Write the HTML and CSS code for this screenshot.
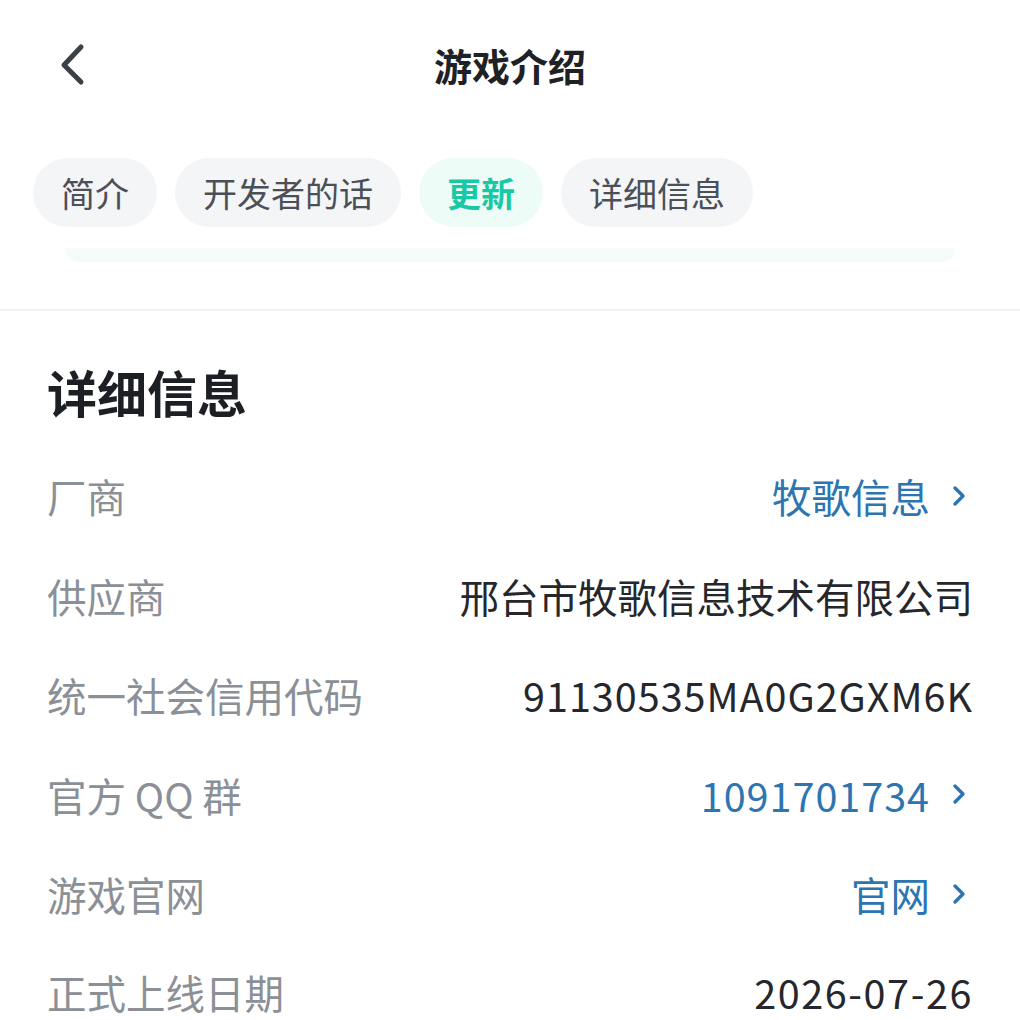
FILE: index.html
```html
<!DOCTYPE html>
<html lang="zh-CN">
<head>
<meta charset="utf-8">
<title>游戏介绍</title>
<link rel="stylesheet" href="styles.css">
</head>
<body>
<div class="page">
  <header class="topbar">
    <div class="back">
      <svg width="40" height="50" viewBox="0 0 40 50" aria-hidden="true">
        <polyline points="24,8 7,26 24,43" fill="none" stroke="#3b4047" stroke-width="5" stroke-linecap="round" stroke-linejoin="round"/>
      </svg>
    </div>
    <h1 class="title">游戏介绍</h1>
    <div></div>
  </header>

  <nav class="tabs">
    <span class="tab">简介</span>
    <span class="tab">开发者的话</span>
    <span class="tab active">更新</span>
    <span class="tab">详细信息</span>
  </nav>
  <div class="card-tail"></div>
  <div class="divider"></div>

  <section class="details">
    <h2 class="heading">详细信息</h2>
    <div class="row">
      <span class="label">厂商</span>
      <span class="value link">牧歌信息<svg class="chev" width="22" height="22" viewBox="0 0 22 22" aria-hidden="true"><polyline points="4,3 12,11 4,19" fill="none" stroke="currentColor" stroke-width="3.4" stroke-linecap="round" stroke-linejoin="round"/></svg></span>
    </div>
    <div class="row">
      <span class="label">供应商</span>
      <span class="value">邢台市牧歌信息技术有限公司</span>
    </div>
    <div class="row">
      <span class="label">统一社会信用代码</span>
      <span class="value num">91130535MA0G2GXM6K</span>
    </div>
    <div class="row">
      <span class="label">官方 QQ 群</span>
      <span class="value link"><span class="num">1091701734</span><svg class="chev" width="22" height="22" viewBox="0 0 22 22" aria-hidden="true"><polyline points="4,3 12,11 4,19" fill="none" stroke="currentColor" stroke-width="3.4" stroke-linecap="round" stroke-linejoin="round"/></svg></span>
    </div>
    <div class="row">
      <span class="label">游戏官网</span>
      <span class="value link">官网<svg class="chev" width="22" height="22" viewBox="0 0 22 22" aria-hidden="true"><polyline points="4,3 12,11 4,19" fill="none" stroke="currentColor" stroke-width="3.4" stroke-linecap="round" stroke-linejoin="round"/></svg></span>
    </div>
    <div class="row last">
      <span class="label">正式上线日期</span>
      <span class="value num wide">2026-07-26</span>
    </div>
  </section>
</div>
</body>
</html>
```

FILE: styles.css
```css
* {
  box-sizing: border-box;
}

html, body {
  margin: 0;
  padding: 0;
  background: #ffffff;
}

body {
  font-family: "Noto Sans CJK SC", "Noto Sans", sans-serif;
  color: #222429;
}

.page {
  width: 1020px;
}

.topbar {
  height: 130px;
  display: grid;
  grid-template-columns: 1fr auto 1fr;
  align-items: center;
}

.back {
  padding-left: 57px;
  display: flex;
  align-items: center;
  padding-bottom: 2px;
}

.back svg {
  display: block;
}

.title {
  margin: 0;
  font-size: 38px;
  font-weight: 700;
  color: #1e2126;
  line-height: 1;
}

.tabs {
  margin-top: 28px;
  padding-left: 33px;
  display: flex;
  gap: 18px;
}

.tab {
  height: 69px;
  padding: 0 28px;
  border-radius: 35px;
  background: #f4f5f7;
  color: #4b5058;
  font-size: 34px;
  display: flex;
  align-items: center;
  line-height: 1;
}

.tab.active {
  background: #eefcf8;
  color: #19c8a4;
  font-weight: 700;
}

.card-tail {
  margin: 21px 65px 0;
  height: 14px;
  border-radius: 0 0 26px 26px;
  background: linear-gradient(#fafbfb, #f1fcf9);
}

.divider {
  margin-top: 47px;
  height: 2px;
  background: #f1f2f4;
}

.details {
  padding: 0 47px;
}

.heading {
  margin: 45px 0 0;
  height: 70px;
  display: flex;
  align-items: center;
  font-size: 50px;
  font-weight: 700;
  color: #1c1f24;
  line-height: 1;
}

.details .heading + .row {
  margin-top: 20px;
}

.row {
  height: 99.5px;
  display: flex;
  align-items: center;
  justify-content: space-between;
  font-size: 39.5px;
  line-height: 1;
}

.row.last {
  height: 96px;
}

.label {
  color: #8b9097;
}

.value {
  color: #25272c;
  display: flex;
  align-items: center;
}

.num {
  letter-spacing: 1px;
}

.num.wide {
  letter-spacing: 1.6px;
}

.value.link {
  color: #2c75b0;
}

.chev {
  display: block;
  margin-left: 21px;
}
```
